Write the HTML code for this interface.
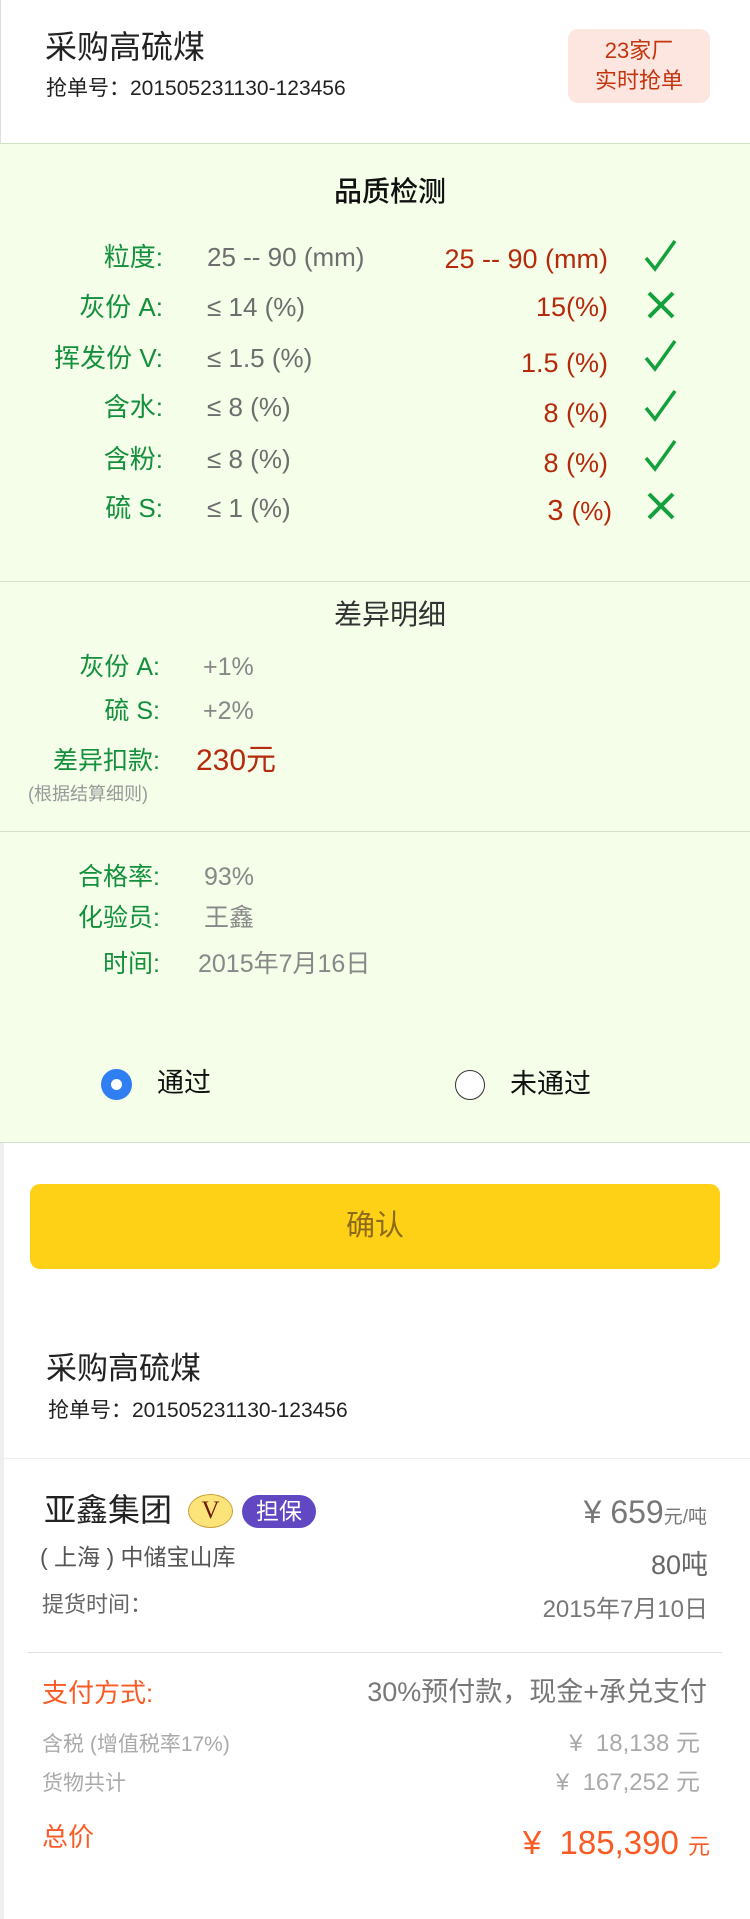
<!DOCTYPE html>
<html><head><meta charset="utf-8"><style>
*{margin:0;padding:0;box-sizing:border-box}
body{width:750px;height:1919px;background:#fff;position:relative;overflow:hidden;font-family:"Liberation Sans","Noto Sans CJK SC",sans-serif}
.a{position:absolute;white-space:nowrap;line-height:1}
.g{color:#14903c}.gr{color:#6e6e6e}.r{color:#b52a0c}.o{color:#fa5a23}
.ck{position:absolute;width:40px;height:40px}
</style></head><body>
<div style="position:absolute;left:0;top:0;width:1px;height:143px;background:#ddd"></div>
<div class="a" style="left:45px;top:31px;font-size:32px;color:#222">采购高硫煤</div>
<div class="a" style="left:46px;top:78px;font-size:21px;color:#222">抢单号：201505231130-123456</div>
<div style="position:absolute;left:568px;top:29px;width:142px;height:74px;border-radius:10px;background:#fde6df;color:#c4340e;font-size:22px;text-align:center;line-height:30px;padding-top:7px">23家厂<br>实时抢单</div>

<div style="position:absolute;left:0;top:143px;width:750px;height:1000px;background:#f4fee9;border-top:1px solid #cfe3c4;border-bottom:1px solid #d4dccc"></div>
<div style="position:absolute;left:0;top:581px;width:750px;height:1px;background:#d4e0cc"></div>
<div style="position:absolute;left:0;top:831px;width:750px;height:1px;background:#d4e0cc"></div>
<div style="position:absolute;left:0;top:1143px;width:4px;height:776px;background:#eee"></div>

<div class="a" style="left:0;width:780px;text-align:center;top:178px;font-size:28px;color:#111;font-weight:500">品质检测</div>

<div class="a g" style="right:587px;top:244px;font-size:26px">粒度:</div>
<div class="a g" style="right:587px;top:294px;font-size:26px">灰份 A:</div>
<div class="a g" style="right:587px;top:345px;font-size:26px">挥发份 V:</div>
<div class="a g" style="right:587px;top:394px;font-size:26px">含水:</div>
<div class="a g" style="right:587px;top:446px;font-size:26px">含粉:</div>
<div class="a g" style="right:587px;top:495px;font-size:26px">硫 S:</div>

<div class="a gr" style="left:207px;top:244px;font-size:26px">25 -- 90 (mm)</div>
<div class="a gr" style="left:207px;top:294px;font-size:26px">≤ 14 (%)</div>
<div class="a gr" style="left:207px;top:345px;font-size:26px">≤ 1.5 (%)</div>
<div class="a gr" style="left:207px;top:394px;font-size:26px">≤ 8 (%)</div>
<div class="a gr" style="left:207px;top:446px;font-size:26px">≤ 8 (%)</div>
<div class="a gr" style="left:207px;top:495px;font-size:26px">≤ 1 (%)</div>

<div class="a r" style="right:142px;top:246px;font-size:27px">25 -- 90 (mm)</div>
<div class="a r" style="right:142px;top:294px;font-size:27px">15(%)</div>
<div class="a r" style="right:142px;top:350px;font-size:27px">1.5 (%)</div>
<div class="a r" style="right:142px;top:400px;font-size:27px">8 (%)</div>
<div class="a r" style="right:142px;top:450px;font-size:27px">8 (%)</div>
<div class="a r" style="right:138px;top:497px;font-size:29px">3 <span style="font-size:26px">(%)</span></div>

<svg class="ck" style="left:641px;top:236px" viewBox="0 0 40 40"><path d="M5 22 L14 33 L34 5" fill="none" stroke="#14a03c" stroke-width="3.5"/></svg>
<svg class="ck" style="left:641px;top:285px" viewBox="0 0 40 40"><path d="M8 8 L32 32 M32 8 L8 32" fill="none" stroke="#14a03c" stroke-width="4"/></svg>
<svg class="ck" style="left:641px;top:336px" viewBox="0 0 40 40"><path d="M5 22 L14 33 L34 5" fill="none" stroke="#14a03c" stroke-width="3.5"/></svg>
<svg class="ck" style="left:641px;top:386px" viewBox="0 0 40 40"><path d="M5 22 L14 33 L34 5" fill="none" stroke="#14a03c" stroke-width="3.5"/></svg>
<svg class="ck" style="left:641px;top:436px" viewBox="0 0 40 40"><path d="M5 22 L14 33 L34 5" fill="none" stroke="#14a03c" stroke-width="3.5"/></svg>
<svg class="ck" style="left:641px;top:486px" viewBox="0 0 40 40"><path d="M8 8 L32 32 M32 8 L8 32" fill="none" stroke="#14a03c" stroke-width="4"/></svg>

<div class="a" style="left:0;width:780px;text-align:center;top:601px;font-size:28px;color:#333">差异明细</div>
<div class="a g" style="right:590px;top:655px;font-size:25px">灰份 A:</div>
<div class="a g" style="right:590px;top:699px;font-size:25px">硫 S:</div>
<div class="a g" style="right:590px;top:749px;font-size:25px">差异扣款:</div>
<div class="a" style="left:28px;top:785px;font-size:18px;color:#999">(根据结算细则)</div>
<div class="a" style="left:203px;top:655px;font-size:25px;color:#888">+1%</div>
<div class="a" style="left:203px;top:699px;font-size:25px;color:#888">+2%</div>
<div class="a r" style="left:196px;top:746px;font-size:30px">230元</div>

<div class="a g" style="right:590px;top:865px;font-size:25px">合格率:</div>
<div class="a g" style="right:590px;top:906px;font-size:25px">化验员:</div>
<div class="a g" style="right:590px;top:952px;font-size:25px">时间:</div>
<div class="a" style="left:204px;top:865px;font-size:25px;color:#888">93%</div>
<div class="a" style="left:204px;top:906px;font-size:25px;color:#888">王鑫</div>
<div class="a" style="left:198px;top:952px;font-size:25px;color:#888">2015年7月16日</div>

<div style="position:absolute;left:101px;top:1069px;width:31px;height:31px;border-radius:50%;background:#2f7ff2"></div>
<div style="position:absolute;left:111px;top:1079px;width:11px;height:11px;border-radius:50%;background:#fff"></div>
<div class="a" style="left:157px;top:1070px;font-size:27px;color:#111">通过</div>
<div style="position:absolute;left:455px;top:1070px;width:30px;height:30px;border-radius:50%;border:1px solid #333;background:#fff"></div>
<div class="a" style="left:510px;top:1071px;font-size:27px;color:#111">未通过</div>

<div style="position:absolute;left:30px;top:1184px;width:690px;height:85px;border-radius:10px;background:#fed117;color:#8c6a1a;font-size:29px;text-align:center;line-height:85px">确认</div>

<div class="a" style="left:46px;top:1353px;font-size:31px;color:#222">采购高硫煤</div>
<div class="a" style="left:48px;top:1400px;font-size:21px;color:#222">抢单号：201505231130-123456</div>
<div style="position:absolute;left:4px;top:1458px;width:746px;height:1px;background:#eee"></div>

<div class="a" style="left:44px;top:1494px;font-size:32px;color:#222">亚鑫集团</div>
<div style="position:absolute;left:188px;top:1494px;width:45px;height:34px;border-radius:50%;background:#fde47a;border:1px solid #c9a13a;color:#6b1a05;font-family:'Liberation Serif',serif;font-size:25px;text-align:center;line-height:32px">V</div>
<div style="position:absolute;left:242px;top:1495px;width:74px;height:33px;border-radius:17px;background:#6148c2;color:#fff;font-size:23px;text-align:center;line-height:33px">担保</div>
<div class="a" style="right:43px;top:1496px;font-size:32px;color:#777">¥ 659<span style="font-size:19px">元/吨</span></div>
<div class="a" style="left:40px;top:1546px;font-size:23px;color:#555">( 上海 ) 中储宝山库</div>
<div class="a" style="right:42px;top:1552px;font-size:27px;color:#666">80吨</div>
<div class="a" style="left:42px;top:1594px;font-size:22px;color:#666">提货时间：</div>
<div class="a" style="right:42px;top:1598px;font-size:24px;color:#777">2015年7月10日</div>
<div style="position:absolute;left:28px;top:1652px;width:694px;height:1px;background:#ddd"></div>

<div class="a o" style="left:42px;top:1680px;font-size:26px">支付方式:</div>
<div class="a" style="right:43px;top:1679px;font-size:27px;color:#777">30%预付款，现金+承兑支付</div>
<div class="a" style="left:42px;top:1734px;font-size:21px;color:#aaa">含税 (增值税率17%)</div>
<div class="a" style="right:50px;top:1732px;font-size:24px;color:#aaa">¥&nbsp; 18,138 元</div>
<div class="a" style="left:42px;top:1773px;font-size:21px;color:#aaa">货物共计</div>
<div class="a" style="right:50px;top:1771px;font-size:24px;color:#aaa">¥&nbsp; 167,252 元</div>
<div class="a o" style="left:42px;top:1824px;font-size:26px">总价</div>
<div class="a o" style="right:40px;top:1826px;font-size:33px">¥&nbsp; 185,390 <span style="font-size:22px">元</span></div>
</body></html>
